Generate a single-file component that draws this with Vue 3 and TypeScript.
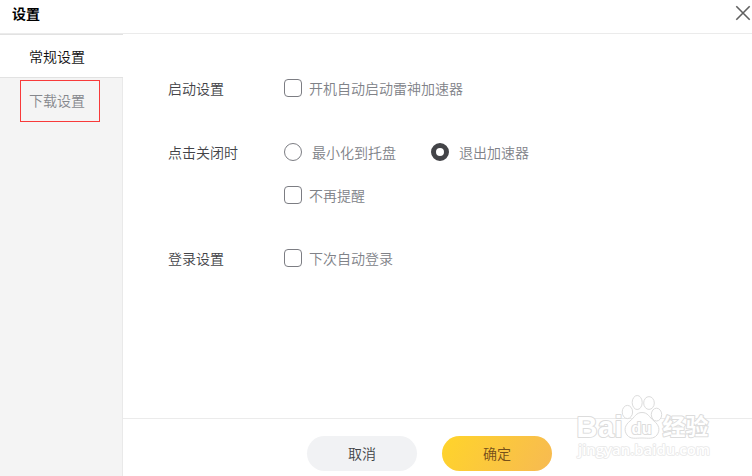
<script setup lang="ts">
import { ref } from 'vue'

const tabs = ['常规设置', '下载设置']
const activeTab = ref(0)
const closeAction = ref<'tray' | 'exit'>('exit')
const autoStart = ref(false)
const dontRemind = ref(false)
const autoLogin = ref(false)
</script>

<template>
  <div class="dialog">
    <header class="titlebar">
      <h1>设置</h1>
      <svg class="close" width="16" height="16" viewBox="0 0 16 16">
        <path d="M1.3 1.3 L14.7 14.7 M14.7 1.3 L1.3 14.7" />
      </svg>
    </header>

    <div class="body">
      <nav class="sidebar">
        <div
          v-for="(tab, i) in tabs"
          :key="tab"
          class="tab"
          :class="{ active: activeTab === i, marked: i === 1 }"
          @click="activeTab = i"
        >
          <span>{{ tab }}</span>
        </div>
      </nav>

      <main class="content">
        <section class="settings">
          <div class="row">
            <div class="label">启动设置</div>
            <label class="option" @click="autoStart = !autoStart">
              <i class="box" :class="{ on: autoStart }"></i><span>开机自动启动雷神加速器</span>
            </label>
          </div>
          <div class="row close-row">
            <div class="label">点击关闭时</div>
            <div class="stack">
              <div class="radios">
                <label class="option radio" @click="closeAction = 'tray'">
                  <i class="dot" :class="{ on: closeAction === 'tray' }"></i><span>最小化到托盘</span>
                </label>
                <label class="option radio" @click="closeAction = 'exit'">
                  <i class="dot" :class="{ on: closeAction === 'exit' }"></i><span>退出加速器</span>
                </label>
              </div>
              <label class="option" @click="dontRemind = !dontRemind">
                <i class="box" :class="{ on: dontRemind }"></i><span>不再提醒</span>
              </label>
            </div>
          </div>
          <div class="row login-row">
            <div class="label">登录设置</div>
            <label class="option" @click="autoLogin = !autoLogin">
              <i class="box" :class="{ on: autoLogin }"></i><span>下次自动登录</span>
            </label>
          </div>
        </section>

        <footer class="footer">
          <button class="btn cancel">取消</button>
          <button class="btn confirm">确定</button>
        </footer>
      </main>
    </div>

    <svg class="watermark" width="150" height="76" viewBox="570 390 150 76">
      <g class="paw">
        <ellipse cx="627.4" cy="412" rx="5.2" ry="6.6" />
        <ellipse cx="637.2" cy="402.5" rx="5" ry="7" />
        <ellipse cx="649" cy="403" rx="5.3" ry="6.4" />
        <ellipse cx="656.5" cy="414.6" rx="5.2" ry="6.4" />
        <path d="M642 412.500C636 412.500 635 417 630 421C625 425 623.500 430 627 435C630.500 439.500 636 438 642 438C648 438 653.500 439.500 657 435C660.500 430 659 425 654 421C649 417 648 412.500 642 412.500Z" />
      </g>
      <text class="latin" x="576.5" y="436.500" textLength="46">Bai</text>
      <text class="du" x="631.5" y="433.8" textLength="20">du</text>
      <text class="cjk" x="662.5" y="434.5" textLength="46">经验</text>
      <text class="url" x="578" y="455" textLength="132" lengthAdjust="spacingAndGlyphs">jingyan.baidu.com</text>
    </svg>
  </div>
</template>

<style>
body {
  background: #fff;
}
</style>

<style scoped>
.dialog {
  position: relative;
  display: flex;
  flex-direction: column;
  width: 752px;
  height: 476px;
  overflow: hidden;
  background: #fff;
  font-family: "Noto Sans CJK SC", sans-serif;
  font-size: 14px;
  font-weight: 350;
  line-height: 20px;
}
.titlebar {
  display: flex;
  justify-content: space-between;
  height: 33px;
  flex: none;
  border-bottom: 1px solid #ebebeb;
}
h1 {
  margin: 3px 0 0 12px;
  font-size: 14px;
  line-height: 20px;
  font-weight: 700;
  color: #000;
}
.close {
  margin: 5px 1px 0 0;
}
.close path {
  stroke: #606060;
  stroke-width: 1.6;
  fill: none;
}
.body {
  display: flex;
  flex: 1;
}
.sidebar {
  box-sizing: border-box;
  width: 123px;
  background: #f4f4f4;
  border-right: 1px solid #e9e9e9;
}
.tab {
  box-sizing: border-box;
  color: #85878c;
}
.tab.active {
  width: 123px;
  height: 44px;
  padding: 11px 0 0 29px;
  background: #fff;
  border-top: 1px solid #e2e2e2;
  border-bottom: 1px solid #e2e2e2;
  color: #111;
}
.tab.marked {
  width: 80px;
  height: 42px;
  margin: 2px 0 0 20px;
  padding: 9px 0 0 8px;
  border: 1px solid #f83a3a;
}
.content {
  display: flex;
  flex-direction: column;
  flex: 1;
}
.settings {
  box-sizing: border-box;
  height: 384px;
  padding: 44px 0 0 45px;
}
.row {
  display: flex;
  color: #424347;
}
.close-row {
  margin-top: 44px;
}
.login-row {
  margin-top: 43px;
}
.label {
  width: 116px;
}
.option {
  display: flex;
  align-items: flex-start;
  gap: 7px;
  height: 20px;
  color: #808288;
}
.radio {
  gap: 10px;
}
.stack {
  display: flex;
  flex-direction: column;
  gap: 23px;
}
.radios {
  display: flex;
  gap: 35px;
}
.box,
.dot {
  box-sizing: border-box;
  width: 18px;
  height: 18px;
  margin-top: 1px;
  border: 1px solid #7c7d83;
  border-radius: 4px;
}
.dot {
  border-radius: 50%;
}
.dot.on {
  border: 5px solid #434448;
}
.box.on {
  background: #434448;
}
.footer {
  box-sizing: border-box;
  display: flex;
  gap: 25px;
  flex: 1;
  padding: 17px 0 0 184px;
  border-top: 1px solid #ebebeb;
}
.btn {
  width: 110px;
  height: 35px;
  padding: 0 0 1px;
  border: 0;
  border-radius: 18px;
  font: inherit;
}
.cancel {
  background: #f1f2f4;
  color: #424347;
}
.confirm {
  background: linear-gradient(120deg, #ffd42a, #f7ba52);
  color: #75501a;
}
.watermark {
  position: absolute;
  left: 570px;
  top: 390px;
  fill: #fff;
  stroke: #dcdcdc;
  stroke-width: 1;
}
.watermark text {
  font-family: "Liberation Sans", "Noto Sans CJK SC", sans-serif;
  font-weight: 700;
  paint-order: stroke;
  stroke-width: 2;
  stroke-linejoin: round;
}
.watermark .latin {
  font-size: 29px;
}
.watermark .du {
  font-size: 16px;
}
.watermark .cjk {
  font-family: "Noto Sans CJK SC", sans-serif;
  font-size: 23px;
}
.watermark .url {
  font-family: "Open Sans", sans-serif;
  font-size: 15px;
  font-weight: 600;
  stroke: #e8e8e8;
  stroke-width: 1.6;
}
</style>
